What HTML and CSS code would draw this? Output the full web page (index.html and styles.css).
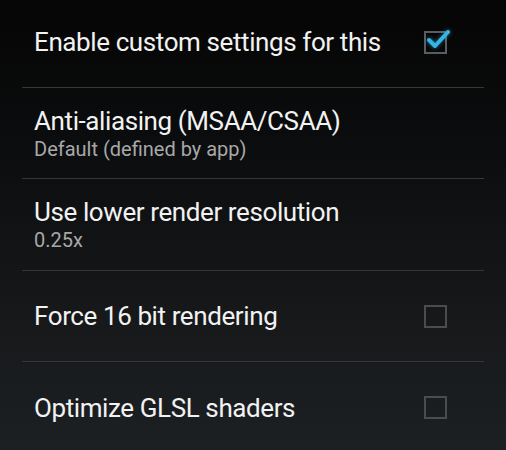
FILE: index.html
```html
<!DOCTYPE html>
<html>
<head>
<meta charset="utf-8">
<link rel="stylesheet" href="styles.css">
</head>
<body>
<div class="list">
  <div class="row single">
    <div class="text"><div class="title">Enable custom settings for this</div></div>
    <div class="check on">
      <svg class="tick" width="30" height="30" viewBox="0 0 30 30"><path d="M6 15 L12 21 L25 7" fill="none" stroke="#33b5e5" stroke-width="4" stroke-linecap="round" stroke-linejoin="round"/></svg>
    </div>
  </div>
  <div class="row double">
    <div class="text">
      <div class="title">Anti-aliasing (MSAA/CSAA)</div>
      <div class="sub">Default (defined by app)</div>
    </div>
  </div>
  <div class="row double tall">
    <div class="text">
      <div class="title">Use lower render resolution</div>
      <div class="sub">0.25x</div>
    </div>
  </div>
  <div class="row single">
    <div class="text"><div class="title">Force 16 bit rendering</div></div>
    <div class="check"></div>
  </div>
  <div class="row single">
    <div class="text"><div class="title">Optimize GLSL shaders</div></div>
    <div class="check"></div>
  </div>
</div>
</body>
</html>
```
FILE: styles.css
```css
html, body {
  margin: 0;
  padding: 0;
  height: 100%;
}
body {
  width: 506px;
  height: 450px;
  overflow: hidden;
  background: linear-gradient(180deg, #050505 0%, #0b0c0d 30%, #16181a 70%, #1d2023 100%);
  font-family: Roboto, "Noto Sans", sans-serif;
}
.list {
  margin-top: -3px;
  display: flex;
  flex-direction: column;
}
.row {
  height: 91px;
  flex: none;
  margin: 0 22px;
  padding: 0 37px 0 12px;
  display: flex;
  align-items: center;
  border-bottom: 1px solid #34373a;
  box-sizing: border-box;
}
.row.tall { height: 92px; }
.row:last-child { border-bottom: none; }
.text { flex: 1; }
.title {
  color: #f2f2f2;
  font-size: 26px;
  letter-spacing: -0.4px;
  line-height: 30px;
}
.double .text { margin-top: 2px; }
.double .title { line-height: 28px; }
.sub {
  color: #a8a8a8;
  font-size: 20px;
  line-height: 26px;
  margin-top: 1px;
}
.check {
  width: 23px;
  height: 23px;
  box-sizing: border-box;
  border: 2px solid #4a4d50;
  position: relative;
}
.check.on { border-color: #5a5d60; }
.tick {
  position: absolute;
  left: -3px;
  top: -8px;
  filter: drop-shadow(0 0 2px rgba(51,181,229,0.6));
}
```
